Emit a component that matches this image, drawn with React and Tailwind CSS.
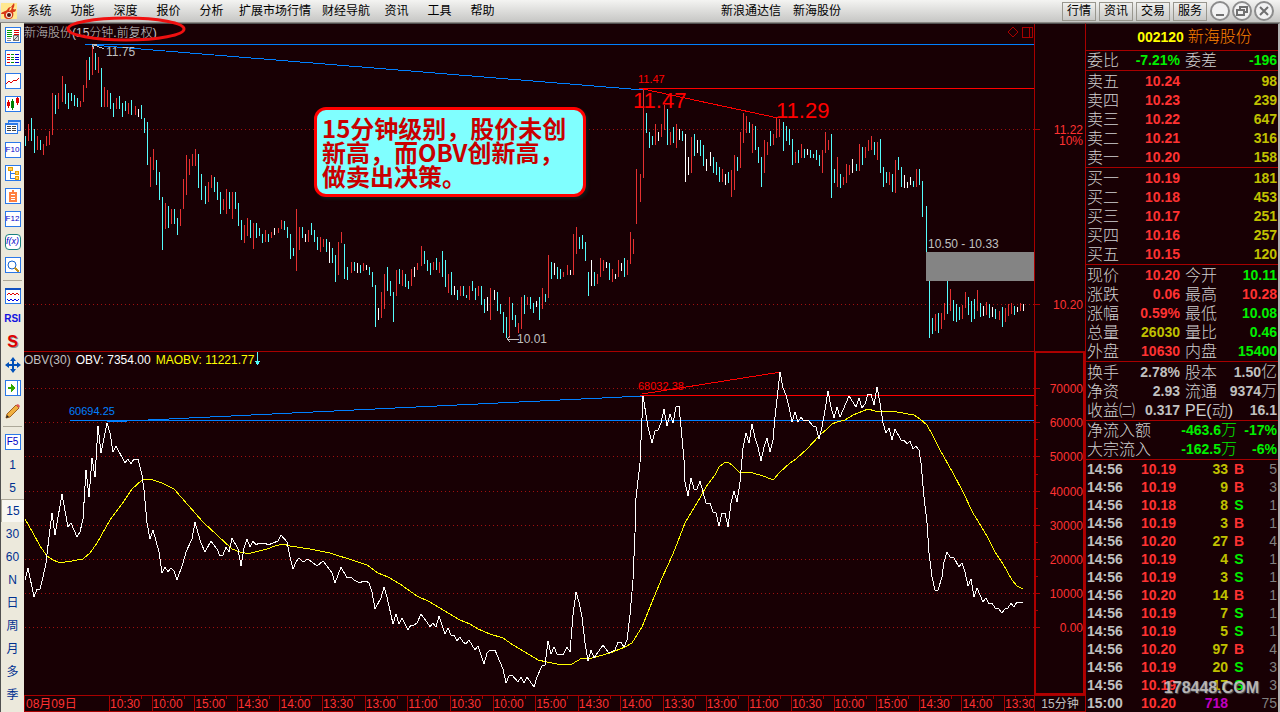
import React, { useState } from 'react';

const FONT = "font-['Liberation_Sans','Noto_Sans_CJK_SC',sans-serif]";

const BAR_COLORS = { r: '#e53030', c: '#54fcfc', w: '#ffffff' };

// x, high, low, colour
const BARS = `25,136,146,c 28,124,141,r 31,118,141,c 34,129,153,c 37,136,150,r 40,140,150,c 43,144,155,r 46,136,146,r
49,131,145,r 52,93,135,r 55,95,114,c 58,93,109,r 62,76,102,r 65,84,104,c 68,93,109,c 71,93,101,c 74,95,106,c 77,98,107,c
80,101,107,r 83,85,102,r 86,60,88,r 89,57,80,c 92,45,75,r 95,53,70,c 98,57,73,r 101,68,107,c 104,87,107,r 107,90,107,r
110,93,109,c 113,103,117,c 116,98,109,r 119,96,109,c 122,103,117,c 125,101,111,c 128,103,114,r 131,100,115,c 135,106,115,r
138,109,117,w 141,105,119,c 144,118,133,c 147,122,165,c 150,157,187,r 153,149,170,r 156,160,185,c 159,172,200,c
162,197,250,c 165,203,229,r 168,206,228,c 171,209,224,r 174,209,224,c 177,218,235,c 180,209,226,r 183,179,209,r
186,155,195,r 189,159,175,r 192,154,166,r 195,149,166,r 198,154,188,c 201,174,200,c 205,186,204,c 208,182,202,r
211,175,188,r 214,177,192,c 217,182,200,c 220,192,214,c 223,199,210,r 226,189,214,r 229,192,209,c 232,192,219,r
235,192,209,c 238,203,226,c 241,220,240,c 244,225,243,r 247,218,236,r 250,220,238,c 253,223,249,r 256,223,238,c
259,228,236,c 262,234,243,c 265,230,242,r 268,234,242,c 271,232,238,r 274,228,235,w 278,228,233,r 281,220,229,r
284,221,230,c 287,227,238,c 290,234,259,c 293,248,256,c 296,209,271,r 299,227,250,r 302,227,238,c 305,234,242,w
308,230,242,r 311,223,235,c 314,230,242,c 317,237,250,c 320,237,252,r 323,239,247,r 326,239,252,c 329,242,263,w
332,248,263,c 335,255,282,c 338,242,275,r 341,232,243,r 344,244,279,c 347,267,280,c 351,262,273,r 354,262,271,c
357,263,273,w 360,265,273,c 363,263,271,r 366,265,270,w 369,267,275,c 372,272,287,c 375,285,327,c 378,308,320,w
381,292,318,r 384,274,309,r 387,267,291,c 390,281,296,c 393,292,322,c 396,270,296,r 399,269,284,c 402,270,286,r
405,274,287,c 408,281,289,c 411,269,286,r 414,267,277,w 417,263,270,r 421,246,266,r 424,251,264,c 427,260,271,c
430,263,275,c 433,262,270,r 436,258,270,c 439,262,273,r 442,251,277,c 445,260,287,c 448,274,293,r 451,272,295,c
454,286,295,w 457,290,300,c 460,286,296,r 463,286,296,c 466,295,298,c 469,286,300,r 472,281,291,c 475,288,300,c
478,286,296,r 481,286,305,c 484,299,313,c 487,297,311,w 490,288,320,r 494,290,300,w 497,292,311,c 500,304,314,c
503,312,333,c 506,317,338,c 509,297,338,r 512,303,320,c 515,315,327,c 518,323,333,r 521,297,329,r 524,295,314,c
527,297,305,r 530,297,309,c 533,303,313,c 536,301,307,w 539,297,320,c 542,288,309,r 545,294,302,c 548,255,298,r
551,262,279,c 554,263,275,w 557,267,279,c 560,269,279,c 563,272,277,r 567,265,275,r 570,270,275,w 573,234,275,r
576,227,254,r 579,237,249,c 582,235,249,c 585,242,261,c 588,272,296,c 591,260,286,w 594,272,286,c 597,274,284,r
600,258,277,r 603,260,271,r 606,262,268,w 609,263,280,c 612,269,282,r 615,274,279,w 618,260,277,r 621,263,271,w
624,258,277,c 627,260,275,r 630,232,264,r 633,239,254,r 636,169,224,r 640,174,202,r 643,89,178,r 646,113,133,c
649,132,148,c 652,136,145,c 655,124,145,r 658,132,141,w 661,124,137,r 664,105,130,r 667,109,145,c 670,132,145,r
673,127,143,c 676,124,148,r 679,129,140,w 682,131,141,c 685,134,182,w 688,157,175,w 691,137,173,r 694,134,156,c
697,140,153,w 700,140,156,c 703,145,166,c 706,159,171,w 710,152,166,w 713,157,173,c 716,162,175,c 719,167,182,c
722,169,182,r 725,174,185,w 728,172,183,c 731,170,197,r 734,155,190,r 737,157,171,c 740,132,168,r 743,113,143,r
746,116,133,r 749,122,133,c 752,124,153,r 755,126,150,c 758,147,163,c 761,157,187,c 764,140,173,r 767,142,155,r
770,131,146,c 773,134,145,r 776,118,138,r 779,119,137,r 783,122,151,c 786,126,141,c 789,129,145,c 792,139,165,c
795,152,163,r 798,150,163,c 801,144,158,r 804,149,158,c 807,149,155,w 810,150,158,c 813,154,158,c 816,150,160,c
819,155,166,c 822,150,173,r 825,132,153,r 828,140,150,r 831,134,198,c 834,169,183,c 837,157,187,r 840,174,188,c
843,177,185,r 846,164,183,r 849,165,175,r 852,159,173,w 856,164,171,c 859,144,171,r 862,147,165,c 865,147,158,r
868,140,151,r 871,136,150,r 874,142,155,c 877,142,160,r 880,139,173,c 883,167,187,c 886,172,183,c 889,172,185,r
892,174,192,c 895,160,193,r 898,157,170,c 901,167,187,c 904,175,188,w 907,182,188,w 910,177,185,w 913,181,187,c
916,169,187,r 919,169,185,c 922,181,217,c 926,206,252,c 929,281,338,c 932,318,334,c 935,314,331,r 938,313,333,c
941,313,329,r 944,303,320,r 947,281,314,c 950,289,311,r 953,300,321,c 956,304,322,c 959,307,320,c 962,305,319,r
965,292,308,r 968,297,315,c 971,301,322,c 974,299,319,c 977,290,311,r 980,303,317,c 983,306,316,w 986,302,315,r
989,304,318,c 992,307,317,w 995,309,319,c 999,311,320,r 1002,307,327,c 1005,308,322,r 1008,304,316,r 1011,303,314,r
1014,306,315,c 1017,307,312,w 1020,303,311,r 1023,304,311,w`
  .split(/\s+/)
  .map((b) => b.split(','));

const OBV = `25,580 28,568 34,597 37,589 40,589 43,577 46,563 49,537 52,513 55,535 62,494 68,527 71,523 77,537 80,532 83,519
86,470 89,497 92,458 95,477 98,426 101,453 107,423 110,433 113,452 116,446 125,463 128,459 131,464 134,459 138,459 142,475
144,490 147,523 150,539 153,530 159,552 162,573 165,567 168,572 171,568 174,571 177,580 183,563 186,552 192,539 195,522
201,543 205,552 211,541 217,549 220,556 223,555 226,547 229,552 232,538 238,549 241,566 244,548 247,539 250,547 253,541
256,545 259,543 265,543 268,545 278,541 281,535 287,542 290,557 293,569 296,562 299,558 303,562 308,559 317,566 323,561
327,566 332,573 335,583 341,567 347,578 351,577 354,580 360,583 363,581 366,581 369,583 372,592 375,609 381,598 384,587
387,597 393,624 396,614 399,624 402,618 408,630 411,625 414,625 417,623 421,614 427,622 430,627 433,623 436,627 439,616
445,634 448,628 451,635 454,635 457,641 460,637 463,642 466,644 469,640 475,650 478,646 484,664 487,653 490,650 495,650
500,662 503,669 506,683 509,676 512,675 518,682 521,677 524,683 527,677 534,687 537,677 542,666 545,665 548,641 551,654
554,647 557,654 563,655 567,647 570,652 573,615 576,592 579,602 582,617 585,643 588,661 591,650 594,658 603,645 609,653
615,650 618,642 621,642 624,647 627,640 630,615 633,580 635,533 636,498 640,463 643,396 648,427 652,443 655,431 658,430
661,423 664,409 667,426 670,414 673,423 676,407 679,406 681,427 684,460 685,482 688,496 691,478 694,489 697,489 700,481
706,503 710,503 713,512 716,513 719,526 722,513 725,513 728,527 731,503 734,491 737,502 740,482 743,448 746,433 749,443
752,424 755,438 758,447 761,461 764,447 767,438 770,452 773,440 775,417 778,390 780,372 783,388 786,395 789,407 792,422
795,412 798,422 801,417 804,421 808,420 813,426 816,427 819,439 822,427 825,410 828,391 831,407 834,418 837,407 840,417
849,396 856,407 859,398 862,408 865,404 868,394 871,394 874,405 877,387 880,403 883,423 886,433 889,428 892,440 895,429
901,440 904,440 907,444 910,441 913,449 916,446 919,450 921,463 924,497 927,523 929,553 932,577 935,590 938,590 942,577
944,562 947,552 950,557 954,558 959,567 962,563 965,572 968,586 971,579 974,597 977,588 983,602 986,598 989,604 992,603
995,608 999,609 1002,613 1005,609 1008,608 1011,603 1014,607 1017,602 1023,602`;

const MAOBV = `25,519 33,533 40,546 47,556 53,560 58,562 65,562 72,561 83,559 90,553 97,543 110,520 122,504 132,489 142,480
145,479 150,479 162,483 174,489 188,505 203,522 217,535 232,549 240,552 245,553 251,553 267,549 275,546 283,544 290,546
310,549 330,553 355,561 367,565 378,573 388,577 400,584 417,596 430,602 448,613 460,620 470,624 478,629 490,634 503,638
513,645 530,655 538,660 547,662 557,664 572,664 582,658 592,658 610,653 625,647 632,643 642,627 652,602 662,578 673,554
685,523 697,503 706,487 715,475 719,467 724,463 728,462 733,466 739,472 753,473 763,476 771,479 774,479 780,472 790,463
796,459 807,449 820,435 827,429 832,424 837,422 845,420 853,415 863,411 868,409 875,411 883,411 897,412 914,415 920,419
927,425 933,436 940,450 953,473 963,492 973,513 987,536 995,552 1003,564 1012,580 1017,586 1023,589`;

const OBV_LEVELS = [
  [388, '70000'], [422, '60000'], [456, '50000'], [491, '40000'],
  [525, '30000'], [559, '20000'], [593, '10000'], [627, '0.00'],
];

const TIMES = [
  '10:30', '10:00', '15:00', '14:30', '14:00', '13:30', '13:00', '11:00', '10:30', '10:00', '15:00',
  '14:30', '14:00', '13:30', '13:00', '11:00', '10:30', '10:00', '15:00', '14:30', '14:00', '13:30',
];

const MENU = [
  ['系统', 'w-[43px]'], ['功能', 'w-[43px]'], ['深度', 'w-[43px]'], ['报价', 'w-[43px]'], ['分析', 'w-[43px]'],
  ['扩展市场行情', 'w-[84px]'], ['财经导航', 'w-[58px]'], ['资讯', 'w-[43px]'], ['工具', 'w-[43px]'], ['帮助', 'w-[43px]'],
];

const RED = 'text-[#ff3232]';
const GREEN = 'text-[#00f000]';
const YELLOW = 'text-[#c0c000]';
const GRAY = 'text-[#c0c0c0]';

const SELL = [['卖五', '10.24', '98'], ['卖四', '10.23', '239'], ['卖三', '10.22', '647'], ['卖二', '10.21', '316'], ['卖一', '10.20', '158']];
const BUY = [['买一', '10.19', '181'], ['买二', '10.18', '453'], ['买三', '10.17', '251'], ['买四', '10.16', '257'], ['买五', '10.15', '120']];

const DETAIL = [
  ['现价', '10.20', RED, '今开', '10.11', GREEN],
  ['涨跌', '0.06', RED, '最高', '10.28', RED],
  ['涨幅', '0.59%', RED, '最低', '10.08', GREEN],
  ['总量', '26030', YELLOW, '量比', '0.46', GREEN],
  ['外盘', '10630', RED, '内盘', '15400', GREEN],
];

const FINANCE = [
  ['换手', '2.78%', GRAY, '股本', '1.50', GRAY, '亿'],
  ['净资', '2.93', GRAY, '流通', '9374', GRAY, '万'],
  ['收益㈡', '0.317', GRAY, 'PE(动)', '16.1', GRAY],
];

const TRADES = [
  ['14:56', '10.19', '33', 'B', '5'], ['14:56', '10.19', '9', 'B', '3'], ['14:56', '10.18', '8', 'S', '1'],
  ['14:56', '10.19', '3', 'B', '1'], ['14:56', '10.20', '27', 'B', '4'], ['14:56', '10.19', '4', 'S', '1'],
  ['14:56', '10.19', '3', 'S', '1'], ['14:56', '10.20', '14', 'B', '1'], ['14:56', '10.19', '7', 'S', '1'],
  ['14:56', '10.19', '5', 'S', '1'], ['14:56', '10.20', '97', 'B', '4'], ['14:56', '10.19', '20', 'S', '3'],
  ['14:56', '10.19', '17', 'S', '3'], ['15:00', '10.20', '718', '', '75'],
];

const Frame = ({ children, stroke = '#2a78e8' }) => (
  <svg viewBox="0 0 16 16" className="w-4 h-4" fill="none" shapeRendering="crispEdges">
    <rect x="0" y="0" width="16" height="16" fill={stroke} />
    <rect x="1" y="1" width="14" height="14" fill="#fff" />
    {children}
  </svg>
);

const TextIcon = ({ children, size = 'text-[8px]' }) => (
  <span className={`w-4 h-4 flex items-center justify-center border border-[#2a78e8] bg-white text-[#0000c8] leading-none ${size}`}>
    {children}
  </span>
);

const TOOLS_TOP = [
  ['定制版面', <Frame>
    <path d="M2 3h5M2 5h5M2 7h5M2 9h5" stroke="#00a000" />
    <path d="M9 3h5M9 5h5M9 7h5" stroke="#e00000" />
    <path d="M2 11h4M2 13h4" stroke="#888" />
    <circle cx="11" cy="11" r="3" fill="#ddd" stroke="#777" />
    <path d="M9 13l4-4" stroke="#555" />
  </Frame>],
  ['行情列表', <Frame>
    <path d="M2 4h3M2 7h3M2 9h3M2 12h3" stroke="#e00000" />
    <path d="M6 4h3M6 7h3M6 9h3M6 12h3" stroke="#009000" />
    <path d="M10 4h4M10 7h4M10 9h4M10 12h4" stroke="#0000d0" />
  </Frame>],
  ['分时走势', <Frame><path d="M1 11l3-3 2 2 3-3 2 1 3-3" stroke="#e00000" /></Frame>],
  ['K线', <Frame>
    <path d="M3 4h1v8H3zM12 1h1v8h-1z" fill="#e00000" />
    <path d="M7 3h1v11H7z" fill="#008000" />
    <path d="M2 6h3v4H2zM11 2h3v5h-3z" fill="#e00000" />
    <path d="M6 5h3v7H6z" fill="#008000" />
  </Frame>],
  ['多窗口', <svg viewBox="0 0 16 16" className="w-4 h-4" shapeRendering="crispEdges">
    <path d="M3 1h13v11H3z" fill="#2a78e8" />
    <path d="M4 3h11v8H4z" fill="#c8dcff" />
    <path d="M0 4h13v11H0z" fill="#2a78e8" />
    <path d="M1 6h11v8H1z" fill="#fff" />
    <path d="M2 7h4v1H2zM7 7h4v1H7zM2 9h4v1H2zM7 9h4v1H7zM2 11h4v1H2zM7 11h4v1H7z" fill="#444" />
  </svg>],
  ['F10', <TextIcon>F10</TextIcon>],
  ['板块', <Frame>
    <path d="M5 5v8h5M5 8h5" stroke="#2a78e8" />
    <path d="M3 2h4v3H3zM10 6h3v3h-3zM10 11h3v3h-3z" fill="#ffd060" stroke="#e8a000" />
  </Frame>],
  ['自选', <Frame>
    <path d="M4 4h8v10H4zM7 2h2v2H7z" fill="#ff8040" />
    <path d="M6 6h4v1H6zM6 9h4v1H6zM6 11h4v1H6z" fill="#fff" />
  </Frame>],
  ['F12', <TextIcon>F12</TextIcon>],
  ['公式', <span className="w-4 h-4 flex items-center justify-center rounded border border-[#188080] bg-white text-[#0000c8] text-[9px] leading-none italic">f(x)</span>],
  ['查找', <Frame>
    <circle cx="7" cy="8" r="4" stroke="#1060d0" shapeRendering="auto" />
    <path d="M10 11l4 4" stroke="#c09020" strokeWidth="2" />
  </Frame>],
];

const TOOLS_MID = [
  ['指标', <Frame>
    <rect x="0" y="0" width="16" height="2" fill="#1050c0" />
    <path d="M2 7l2-2 2 2 2-2 2 2 2-2 2 2" stroke="#e00000" />
    <path d="M2 11l2 2 2-2 2 2 2-2 2 2 2-2" stroke="#0000e0" />
  </Frame>],
  ['RSI', <span className="text-[10px] font-bold text-[#1010e0] leading-4">RSI</span>],
  ['主力', <span className="text-[16px] font-bold text-[#e00000] leading-4 [text-shadow:1px_1px_0_#888]">S</span>],
  ['移动', <svg viewBox="0 0 16 16" className="w-4 h-4" fill="#0050b8">
    <path d="M8 0l3 4H5zM8 16l3-4H5zM0 8l4-3v6zM16 8l-4-3v6z" />
    <path d="M7 4h2v3h3v2H9v3H7V9H4V7h3z" />
  </svg>],
  ['前进', <Frame>
    <path d="M12 0v16" stroke="#2a78e8" />
    <path d="M3 7h3V4l4 4-4 4V9H3z" fill="#30a800" />
  </Frame>],
  ['画线', <svg viewBox="0 0 16 16" className="w-4 h-4">
    <path d="M1 15l1-4 9-9 3 3-9 9z" fill="#f0b040" stroke="#a06020" />
    <path d="M11 2l2-1 2 2-1 2z" fill="#e05858" />
    <path d="M1 15l1-3 2 2z" fill="#222" />
  </svg>],
];

const PERIODS = ['F5', '1', '5', '15', '30', '60', 'N', '日', '周', '月', '多', '季'];

const ToolButton = ({ label, children, active, onClick }) => (
  <button
    type="button"
    aria-label={label}
    onClick={onClick}
    className={`w-full h-[23px] flex items-center justify-center text-[12px] text-[#003090] ${
      active ? 'bg-[#f8f7f2] border-t border-l border-[#aca899]' : ''
    }`}
  >
    {children}
  </button>
);

const Divider = () => (
  <div className="h-2 flex items-center px-[2px]">
    <div className="w-full h-px bg-[#aca899]" />
  </div>
);

const Sidebar = () => {
  const [period, setPeriod] = useState('15');

  return (
    <aside className="w-6 shrink-0 bg-[#ece9dc] border-l border-[#505050]">
      {TOOLS_TOP.map(([label, icon]) => <ToolButton key={label} label={label}>{icon}</ToolButton>)}
      <Divider />
      {TOOLS_MID.map(([label, icon]) => <ToolButton key={label} label={label}>{icon}</ToolButton>)}
      <Divider />
      {PERIODS.map((p) => (
        <ToolButton key={p} label={p} active={period === p} onClick={() => setPeriod(p)}>
          {p === 'F5' ? <TextIcon size="text-[10px]">F5</TextIcon> : p}
        </ToolButton>
      ))}
    </aside>
  );
};

const Header = () => (
  <header className="h-[23px] flex items-center bg-linear-to-b from-[#f4f4f2] to-[#c6c6c4] border-b border-[#8a8884] text-[12px] text-black">
    <svg viewBox="0 0 16 16" className="w-4 h-4 ml-px">
      <rect width="16" height="16" fill="#ffe890" />
      <path d="M0 11c1-3 4-2 6-4 1-2 2-3 4-3l3-4c1 2 0 4-1 6 1 0 2 1 3 0 0 3-2 3-3 3 1 3 0 6-3 7H6c-3-1-3-3-3-5-1 0-2 0-3 0z" fill="#d83818" />
      <path d="M9 5l2-1-1 3-2 1z" fill="#ffe890" />
      <circle cx="8" cy="12" r="3" fill="#fff0e0" />
      <circle cx="8" cy="12" r="2" fill="#501010" />
    </svg>
    <nav className="flex ml-px">
      {MENU.map(([label, width]) => (
        <button key={label} type="button" className={`${width} text-center whitespace-nowrap`}>{label}</button>
      ))}
    </nav>
    <div className="ml-auto mr-[221px] flex gap-3">
      <span>新浪通达信</span>
      <span>新海股份</span>
    </div>
    <div className="flex gap-[3px]">
      {['行情', '资讯', '交易', '服务'].map((label) => (
        <button key={label} type="button" className="w-[34px] h-[19px] border border-[#98968e] bg-linear-to-b from-[#f0f0ee] to-[#c8c8c6] leading-[17px]">
          {label}
        </button>
      ))}
    </div>
    <div className="flex gap-[2px] ml-[3px] mr-[6px]">
      {[
        ['最小化', 'M6 14h8'],
        ['还原', 'M8 8V6h7v5h-2M5 9h7v5H5z'],
        ['关闭', 'M6 6l8 8M14 6l-8 8'],
      ].map(([label, d]) => (
        <button key={label} type="button" aria-label={label} className="w-5 h-5">
          <svg viewBox="0 0 20 20" className="w-5 h-5" fill="none" stroke="#707070" strokeWidth="2">
            <circle cx="10" cy="10" r="9" fill="#f2f2f2" stroke="#8c8c8c" />
            <path d={d} />
          </svg>
        </button>
      ))}
    </div>
  </header>
);

const GridLine = ({ y }) => (
  <>
    <path d={`M25 ${y}H1034`} stroke="#a01010" strokeDasharray="1 3" />
    <path d={`M1034 ${y}h6`} stroke="#a80000" />
  </>
);

const PriceChart = () => (
  <div className="relative">
    <svg viewBox="24 24 1061 328" className="block w-full h-auto" fill="none" fontSize="12">
      <g shapeRendering="crispEdges">
        <GridLine y={129} />
        <GridLine y={304} />
        <path d="M1034 24V351M24 351H1085" stroke="#a80000" />
        {BARS.map(([x, hi, lo, color]) => (
          <rect key={x} x={x} y={hi} width="1" height={lo - hi} fill={BAR_COLORS[color]} />
        ))}
        <rect x="926" y="252" width="108" height="29" fill="#848484" />
        <path d="M85 44H1034M92 45L643 90" stroke="#0080ff" />
        <path d="M639 88H1034M643 89L778 118" stroke="#ff0000" />
        <path d="M1013 27l5 5-5 5-5-5zM1022 27h10v10h-10zM1029 27v10" stroke="#a80000" />
        <path d="M92 44l12 5M92 44h5M92 44l2 5M507 339h12M507 339l3-3M507 339l3 3" stroke="#c0c0c0" />
      </g>
      <g fill="#c0c0c0">
        <text x="106" y="56">11.75</text>
        <text x="517" y="343">10.01</text>
        <text x="928" y="248">10.50 - 10.33</text>
      </g>
      <g fill="#ff0000">
        <text x="638" y="83" fontSize="11">11.47</text>
        <text x="633" y="108" fontSize="22">11.47</text>
        <text x="776" y="118" fontSize="22">11.29</text>
      </g>
      <g fill="#ff3232" textAnchor="end">
        <text x="1083" y="134">11.22</text>
        <text x="1083" y="145">10%</text>
        <text x="1083" y="309">10.20</text>
      </g>
    </svg>
    <div className="absolute left-0 top-[2px] text-[12px] leading-[14px] text-[#c8c8c8] font-light">新海股份(15分钟.前复权)</div>
    <svg viewBox="0 0 120 26" className="absolute left-[42px] top-[-8px] w-[120px] h-[26px]" fill="none">
      <ellipse cx="60" cy="13" rx="58" ry="11" stroke="#f01010" strokeWidth="3" />
    </svg>
    <div className="absolute left-[290px] top-[83px] w-[272px] h-[90px] px-[5px] pt-[6px] rounded-xl border-3 border-[#ff0000] bg-[#80ffff] text-[#c80000] text-[24px] leading-[24px] font-bold whitespace-nowrap shadow-[2px_2px_3px_#101818] font-['Noto_Sans_CJK_SC',sans-serif]">
      15分钟级别，股价未创
      <br />
      新高，而OBV创新高，
      <br />
      做卖出决策。
    </div>
  </div>
);

const ObvChart = () => (
  <div className="relative">
    <svg viewBox="24 352 1061 343" className="block w-full h-auto" fill="none" fontSize="12">
      <g shapeRendering="crispEdges">
        {OBV_LEVELS.map(([y]) => <GridLine key={y} y={y} />)}
        {OBV_LEVELS.slice(1).map(([y]) => <path key={y} d={`M1035 ${y - 17}h3`} stroke="#a80000" />)}
        <rect x="1035" y="352" width="49" height="342" stroke="#b00000" strokeWidth="2" />
        <path d="M640 395H1034M642 394L781 372" stroke="#ff0000" />
        <path d="M70 420H1034M107 422L643 396" stroke="#0080ff" />
        <polyline points={MAOBV} stroke="#ffff00" />
        <polyline points={OBV} stroke="#ffffff" />
      </g>
      <text x="69" y="415" fontSize="11" fill="#0080ff">60694.25</text>
      <text x="638" y="390" fontSize="11" fill="#ff0000">68032.38</text>
      <g fill="#ff3232" textAnchor="end">
        {OBV_LEVELS.map(([y, label]) => <text key={y} x="1083" y={y + 5}>{label}</text>)}
      </g>
    </svg>
    <div className="absolute left-0 top-0 flex gap-[5px] text-[12px] leading-[16px]">
      <span className="text-[#c0c0c0]">OBV(30)</span>
      <span className="text-white">OBV: 7354.00</span>
      <span className="text-[#ffff00]">MAOBV: 11221.77</span>
      <svg viewBox="0 0 6 14" className="w-[6px] h-[14px] -ml-[4px]" shapeRendering="crispEdges">
        <path d="M2 0h1v13H2zM0 9h5L3 13H2z" fill="#54fcfc" />
      </svg>
    </div>
  </div>
);

const TimeAxis = () => (
  <div className="flex h-[17px] text-[12px] leading-[16px] text-[#ff3232]">
    <div className="flex-1 grid grid-cols-[85px_repeat(21,minmax(0,1fr))_30px] border-y border-[#a80000]">
      <div className="border-l border-[#a80000] pl-px whitespace-nowrap">08月09日</div>
      {TIMES.map((t, i) => (
        <div key={i} className="relative border-l border-[#a80000] whitespace-nowrap">
          <span className="absolute left-[10px] top-0 w-px h-[2px] bg-[#a80000]" />
          <span className="absolute left-[20px] top-0 w-px h-[2px] bg-[#a80000]" />
          <span className="absolute left-[31px] top-0 w-px h-[3px] bg-[#a80000]" />
          {t}
        </div>
      ))}
    </div>
    <div className="w-[51px] border border-r-0 border-[#a80000] bg-[#180004] text-[#c0c0c0] text-center z-10">15分钟</div>
  </div>
);

const Label = ({ children }) => <td className="p-0 text-[16px] font-light text-[#d0d0d0]">{children}</td>;
const Value = ({ className, children, unit }) => (
  <td className={`p-0 text-right font-bold ${className}`}>
    {children}
    {unit && <span className="text-[16px] leading-none font-light">{unit}</span>}
  </td>
);

const PAIR_TABLE = 'w-full table-fixed leading-[19px] whitespace-nowrap [&_tr]:h-[19px]';

const PairCols = () => (
  <colgroup>
    <col className="w-[34px]" />
    <col className="w-[64px]" />
    <col className="w-[34px]" />
    <col />
  </colgroup>
);

const PairTable = ({ rows }) => (
  <table className={PAIR_TABLE}>
    <PairCols />
    <tbody>
      {rows.map(([l1, v1, c1, l2, v2, c2, unit]) => (
        <tr key={l1}>
          <Label>{l1}</Label>
          <Value className={`${c1} pr-[5px]`}>{v1}</Value>
          <Label>{l2}</Label>
          <Value className={c2} unit={unit}>{v2}</Value>
        </tr>
      ))}
    </tbody>
  </table>
);

const DepthTable = ({ rows }) => (
  <table className={PAIR_TABLE}>
    <PairCols />
    <tbody>
      {rows.map(([label, price, volume]) => (
        <tr key={label}>
          <Label>{label}</Label>
          <Value className={`${RED} pr-[5px]`}>{price}</Value>
          <td />
          <Value className={YELLOW}>{volume}</Value>
        </tr>
      ))}
    </tbody>
  </table>
);

const Section = ({ className = '', children }) => (
  <section className={`pl-px pr-px border-b border-[#a80000] ${className}`}>{children}</section>
);

const QuotePanel = () => (
  <aside className="relative w-[195px] shrink-0 border-l border-l-[#a80000] border-r-2 border-r-[#b0b0b0] border-t border-t-[#505050] text-[14px] overflow-hidden">
    <h1 className="h-[27px] flex items-center justify-center gap-1 pl-[25px] border-b border-[#a80000] font-bold text-[#ffff00]">
      002120 <span className="text-[16px] font-light text-[#ff8000]">新海股份</span>
    </h1>
    <Section>
      <PairTable rows={[['委比', '-7.21%', GREEN, '委差', '-196', GREEN]]} />
    </Section>
    <Section className="pt-px"><DepthTable rows={SELL} /></Section>
    <Section className="pt-px"><DepthTable rows={BUY} /></Section>
    <Section className="pt-px"><PairTable rows={DETAIL} /></Section>
    <Section className="pt-px"><PairTable rows={FINANCE} /></Section>
    <Section>
      <table className={PAIR_TABLE}>
        <colgroup>
          <col className="w-[66px]" />
          <col className="w-[84px]" />
          <col />
        </colgroup>
        <tbody>
          <tr><Label>净流入额</Label><Value className={GREEN} unit="万">-463.6</Value><Value className={GREEN}>-17%</Value></tr>
          <tr><Label>大宗流入</Label><Value className={GREEN} unit="万">-162.5</Value><Value className={GREEN}>-6%</Value></tr>
        </tbody>
      </table>
    </Section>
    <table className="w-full table-fixed leading-[18px] font-bold ml-px">
      <colgroup>
        <col className="w-[40px]" />
        <col className="w-[49px]" />
        <col className="w-[52px]" />
        <col className="w-[22px]" />
        <col />
      </colgroup>
      <tbody>
        {TRADES.map(([time, price, volume, side, count], i) => (
          <tr key={i} className="h-[18px] text-right">
            <td className="p-0 text-left text-[#c0c0c0]">{time}</td>
            <td className="p-0 text-[#ff3232]">{price}</td>
            <td className={`p-0 ${side ? YELLOW : 'text-[#c000c0]'}`}>{volume}</td>
            <td className={`p-0 text-center ${side === 'B' ? RED : GREEN}`}>{side}</td>
            <td className="p-0 pr-[2px] font-normal text-[#808080]">{count}</td>
          </tr>
        ))}
      </tbody>
    </table>
    <div className="absolute right-[19px] bottom-[14px] text-[16px] leading-[20px] font-bold text-[#d8d8d8]/80 [text-shadow:1px_1px_1px_#555]">
      178448.COM
    </div>
  </aside>
);

const App = () => (
  <div className={`${FONT} h-screen flex flex-col overflow-hidden bg-[#180004]`}>
    <Header />
    <div className="flex flex-1 min-h-0">
      <Sidebar />
      <main className="flex-1 min-w-0 border-t border-[#505050]">
        <PriceChart />
        <ObvChart />
        <TimeAxis />
      </main>
      <QuotePanel />
    </div>
  </div>
);

export default App;
